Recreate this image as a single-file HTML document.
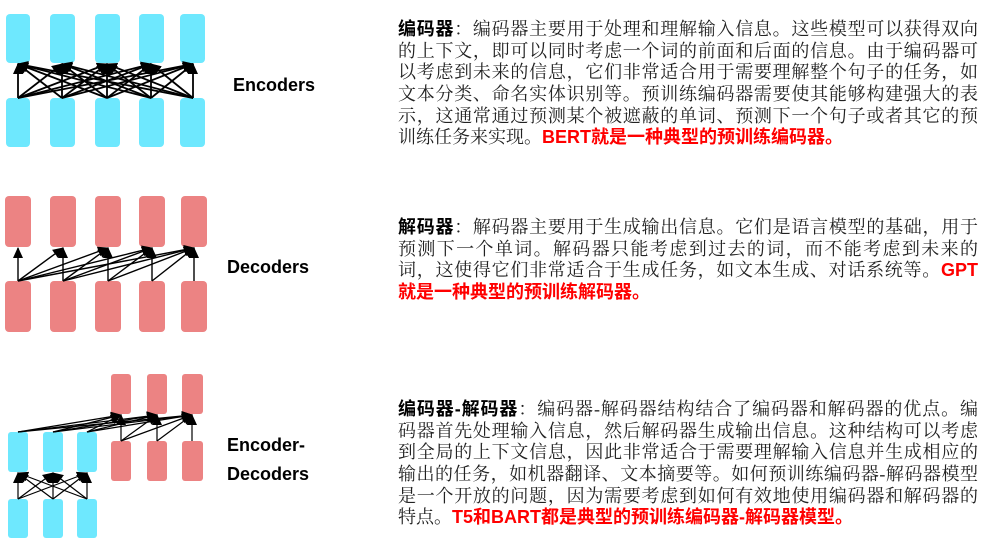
<!DOCTYPE html>
<html><head><meta charset="utf-8"><style>
body{margin:0;width:996px;height:558px;background:#fff;position:relative;overflow:hidden}
.lbl{position:absolute;font-family:"Liberation Sans",sans-serif;font-weight:bold;font-size:18px;color:#000;line-height:24px}
.txt{position:absolute;left:398px;width:580px;font-family:"Liberation Serif","Noto Serif CJK SC",serif;font-size:18px;line-height:21.7px;color:#222}
.txt div{text-align:justify;text-align-last:justify;white-space:nowrap;height:21.7px}
.txt div.l{text-align-last:left}
b.k{font-family:"Liberation Sans","Noto Sans CJK SC",sans-serif;font-weight:bold;color:#000}
.r{color:#f00;font-family:"Liberation Sans","Noto Sans CJK SC",sans-serif;font-weight:bold}
</style></head><body>
<svg width="230" height="558" style="position:absolute;left:0;top:0">
<defs><marker id="a" markerWidth="11" markerHeight="10" refX="10" refY="5" orient="auto" markerUnits="userSpaceOnUse"><path d="M0,0L11,5L0,10z" fill="#000"/></marker></defs>
<g fill="#6ee8fe">
<rect x="6" y="14" width="24" height="49" rx="4"/><rect x="50" y="14" width="25" height="49" rx="4"/><rect x="95" y="14" width="25" height="49" rx="4"/><rect x="139" y="14" width="25" height="49" rx="4"/><rect x="180" y="14" width="25" height="49" rx="4"/>
<rect x="6" y="98" width="24" height="49" rx="4"/><rect x="50" y="98" width="25" height="49" rx="4"/><rect x="95" y="98" width="25" height="49" rx="4"/><rect x="139" y="98" width="25" height="49" rx="4"/><rect x="180" y="98" width="25" height="49" rx="4"/>
</g>
<g stroke="#000" stroke-width="1.8" marker-end="url(#a)">
<line x1="18" y1="98" x2="18" y2="64"/><line x1="18" y1="98" x2="62" y2="64"/><line x1="18" y1="98" x2="107" y2="64"/><line x1="18" y1="98" x2="151" y2="64"/><line x1="18" y1="98" x2="193" y2="64"/>
<line x1="62" y1="98" x2="18" y2="64"/><line x1="62" y1="98" x2="62" y2="64"/><line x1="62" y1="98" x2="107" y2="64"/><line x1="62" y1="98" x2="151" y2="64"/><line x1="62" y1="98" x2="193" y2="64"/>
<line x1="107" y1="98" x2="18" y2="64"/><line x1="107" y1="98" x2="62" y2="64"/><line x1="107" y1="98" x2="107" y2="64"/><line x1="107" y1="98" x2="151" y2="64"/><line x1="107" y1="98" x2="193" y2="64"/>
<line x1="151" y1="98" x2="18" y2="64"/><line x1="151" y1="98" x2="62" y2="64"/><line x1="151" y1="98" x2="107" y2="64"/><line x1="151" y1="98" x2="151" y2="64"/><line x1="151" y1="98" x2="193" y2="64"/>
<line x1="193" y1="98" x2="18" y2="64"/><line x1="193" y1="98" x2="62" y2="64"/><line x1="193" y1="98" x2="107" y2="64"/><line x1="193" y1="98" x2="151" y2="64"/><line x1="193" y1="98" x2="193" y2="64"/>
</g>
<g fill="#ec8383">
<rect x="5" y="196" width="26" height="51" rx="4"/><rect x="50" y="196" width="26" height="51" rx="4"/><rect x="95" y="196" width="26" height="51" rx="4"/><rect x="139" y="196" width="26" height="51" rx="4"/><rect x="181" y="196" width="26" height="51" rx="4"/>
<rect x="5" y="281" width="26" height="51" rx="4"/><rect x="50" y="281" width="26" height="51" rx="4"/><rect x="95" y="281" width="26" height="51" rx="4"/><rect x="139" y="281" width="26" height="51" rx="4"/><rect x="181" y="281" width="26" height="51" rx="4"/>
</g>
<g stroke="#000" stroke-width="1.4" marker-end="url(#a)">
<line x1="18" y1="281" x2="18" y2="248"/><line x1="18" y1="281" x2="63" y2="248"/><line x1="18" y1="281" x2="108" y2="248"/><line x1="18" y1="281" x2="152" y2="248"/><line x1="18" y1="281" x2="194" y2="248"/>
<line x1="63" y1="281" x2="63" y2="248"/><line x1="63" y1="281" x2="108" y2="248"/><line x1="63" y1="281" x2="152" y2="248"/><line x1="63" y1="281" x2="194" y2="248"/>
<line x1="108" y1="281" x2="108" y2="248"/><line x1="108" y1="281" x2="152" y2="248"/><line x1="108" y1="281" x2="194" y2="248"/>
<line x1="152" y1="281" x2="152" y2="248"/><line x1="152" y1="281" x2="194" y2="248"/>
<line x1="194" y1="281" x2="194" y2="248"/>
</g>
<g fill="#6ee8fe">
<rect x="8" y="432" width="20" height="40" rx="3"/><rect x="43" y="432" width="20" height="40" rx="3"/><rect x="77" y="432" width="20" height="40" rx="3"/>
<rect x="8" y="499" width="20" height="39" rx="3"/><rect x="43" y="499" width="20" height="39" rx="3"/><rect x="77" y="499" width="20" height="39" rx="3"/>
</g>
<g fill="#ec8383">
<rect x="111" y="374" width="20" height="40" rx="3"/><rect x="147" y="374" width="20" height="40" rx="3"/><rect x="182" y="374" width="21" height="40" rx="3"/>
<rect x="111" y="441" width="20" height="40" rx="3"/><rect x="147" y="441" width="20" height="40" rx="3"/><rect x="182" y="441" width="21" height="40" rx="3"/>
</g>
<g stroke="#000" stroke-width="1.2" marker-end="url(#a)">
<line x1="18" y1="499" x2="18" y2="473"/><line x1="18" y1="499" x2="53" y2="473"/><line x1="18" y1="499" x2="87" y2="473"/>
<line x1="53" y1="499" x2="18" y2="473"/><line x1="53" y1="499" x2="53" y2="473"/><line x1="53" y1="499" x2="87" y2="473"/>
<line x1="87" y1="499" x2="18" y2="473"/><line x1="87" y1="499" x2="53" y2="473"/><line x1="87" y1="499" x2="87" y2="473"/>
<line x1="18" y1="432" x2="121" y2="415"/><line x1="18" y1="432" x2="157" y2="415"/><line x1="18" y1="432" x2="192" y2="415"/>
<line x1="53" y1="432" x2="121" y2="415"/><line x1="53" y1="432" x2="157" y2="415"/><line x1="53" y1="432" x2="192" y2="415"/>
<line x1="87" y1="432" x2="121" y2="415"/><line x1="87" y1="432" x2="157" y2="415"/><line x1="87" y1="432" x2="192" y2="415"/>
<line x1="121" y1="441" x2="121" y2="415"/><line x1="121" y1="441" x2="157" y2="415"/><line x1="121" y1="441" x2="192" y2="415"/>
<line x1="157" y1="441" x2="157" y2="415"/><line x1="157" y1="441" x2="192" y2="415"/>
<line x1="192" y1="441" x2="192" y2="415"/>
</g>
</svg>
<div class="lbl" style="left:233px;top:73px">Encoders</div>
<div class="lbl" style="left:227px;top:255px">Decoders</div>
<div class="lbl" style="left:227px;top:433px">Encoder-</div>
<div class="lbl" style="left:227px;top:462px">Decoders</div>

<div class="txt" style="top:19px">
<div><b class="k">编码器</b>：编码器主要用于处理和理解输入信息。这些模型可以获得双向</div>
<div>的上下文，即可以同时考虑一个词的前面和后面的信息。由于编码器可</div>
<div>以考虑到未来的信息，它们非常适合用于需要理解整个句子的任务，如</div>
<div>文本分类、命名实体识别等。预训练编码器需要使其能够构建强大的表</div>
<div>示，这通常通过预测某个被遮蔽的单词、预测下一个句子或者其它的预</div>
<div class="l">训练任务来实现。<span class="r">BERT就是一种典型的预训练编码器。</span></div>
</div>
<div class="txt" style="top:217px">
<div><b class="k">解码器</b>：解码器主要用于生成输出信息。它们是语言模型的基础，用于</div>
<div>预测下一个单词。解码器只能考虑到过去的词，而不能考虑到未来的</div>
<div>词，这使得它们非常适合于生成任务，如文本生成、对话系统等。<span class="r">GPT</span></div>
<div class="l"><span class="r">就是一种典型的预训练解码器。</span></div>
</div>
<div class="txt" style="top:399px">
<div><b class="k">编码器-解码器</b>：编码器-解码器结构结合了编码器和解码器的优点。编</div>
<div>码器首先处理输入信息，然后解码器生成输出信息。这种结构可以考虑</div>
<div>到全局的上下文信息，因此非常适合于需要理解输入信息并生成相应的</div>
<div>输出的任务，如机器翻译、文本摘要等。如何预训练编码器-解码器模型</div>
<div>是一个开放的问题，因为需要考虑到如何有效地使用编码器和解码器的</div>
<div class="l">特点。<span class="r">T5和BART都是典型的预训练编码器-解码器模型。</span></div>
</div>
</body></html>
